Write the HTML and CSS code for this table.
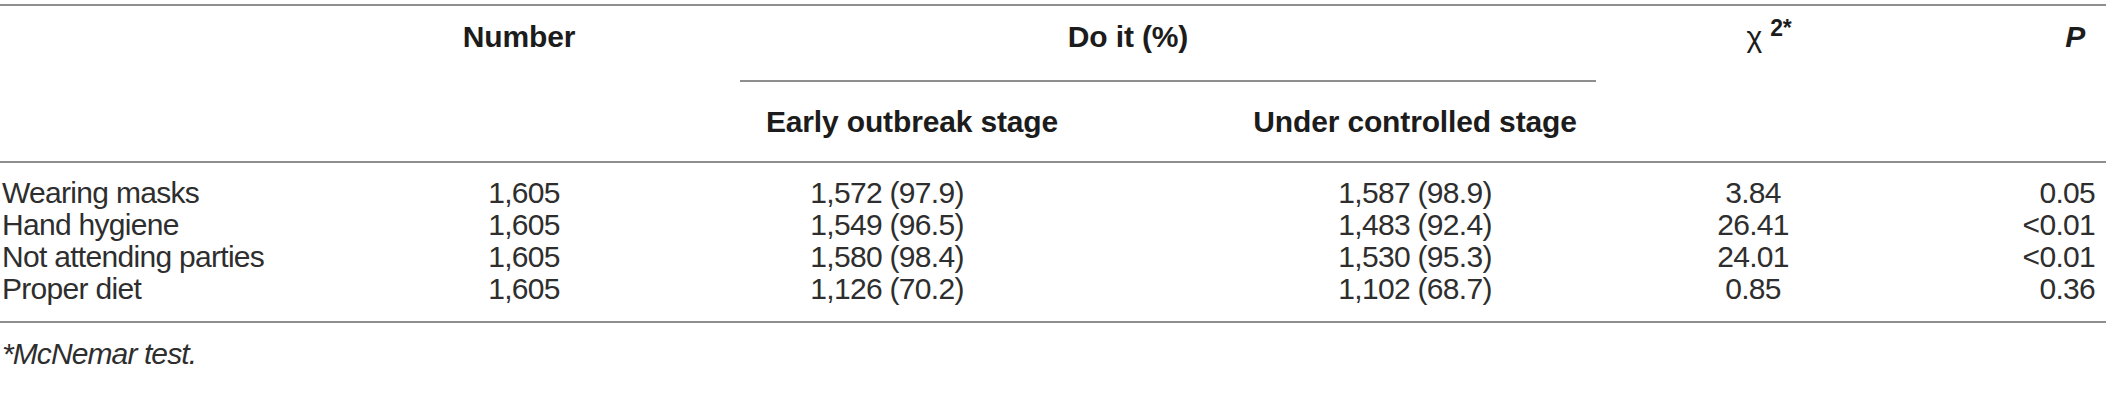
FILE: index.html
```html
<!DOCTYPE html>
<html>
<head>
<meta charset="utf-8">
<link rel="stylesheet" href="styles.css">
</head>
<body>
<div class="wrap">
<table class="data">
  <colgroup>
    <col class="c-label">
    <col class="c-num">
    <col class="c-early">
    <col class="c-under">
    <col class="c-chi">
    <col class="c-p">
  </colgroup>
  <thead>
    <tr class="h1">
      <th class="lab"></th>
      <th class="ctr num">Number</th>
      <th class="ctr span" colspan="2"><div class="doit">Do it (%)</div></th>
      <th class="ctr chihead"><span class="chi">χ</span> <sup class="sup">2*</sup></th>
      <th class="rt phead"><i>P</i></th>
    </tr>
    <tr class="h2">
      <th></th>
      <th></th>
      <th class="ctr earlyhead">Early outbreak stage</th>
      <th class="ctr">Under controlled stage</th>
      <th></th>
      <th></th>
    </tr>
  </thead>
  <tbody>
    <tr>
      <td class="lab">Wearing masks</td>
      <td class="ctr num">1,605</td>
      <td class="ctr early">1,572 (97.9)</td>
      <td class="ctr">1,587 (98.9)</td>
      <td class="ctr">3.84</td>
      <td class="rt">0.05</td>
    </tr>
    <tr>
      <td class="lab">Hand hygiene</td>
      <td class="ctr num">1,605</td>
      <td class="ctr early">1,549 (96.5)</td>
      <td class="ctr">1,483 (92.4)</td>
      <td class="ctr">26.41</td>
      <td class="rt">&lt;0.01</td>
    </tr>
    <tr>
      <td class="lab">Not attending parties</td>
      <td class="ctr num">1,605</td>
      <td class="ctr early">1,580 (98.4)</td>
      <td class="ctr">1,530 (95.3)</td>
      <td class="ctr">24.01</td>
      <td class="rt">&lt;0.01</td>
    </tr>
    <tr>
      <td class="lab">Proper diet</td>
      <td class="ctr num">1,605</td>
      <td class="ctr early">1,126 (70.2)</td>
      <td class="ctr">1,102 (68.7)</td>
      <td class="ctr">0.85</td>
      <td class="rt">0.36</td>
    </tr>
  </tbody>
</table>
<p class="foot">*McNemar test.</p>
</div>
</body>
</html>
```
FILE: styles.css
```css
html, body {
  margin: 0;
  padding: 0;
  background: #ffffff;
}
body {
  font-family: "Liberation Sans", Arial, sans-serif;
  font-size: 30px;
  line-height: 32px;
  letter-spacing: -0.7px;
  color: #2e2e2e;
}
.wrap {
  width: 2106px;
  padding-top: 4px;
}
.data {
  width: 2106px;
  border-collapse: collapse;
  table-layout: fixed;
  border-top: 2px solid #8f8f8f;
  border-bottom: 2px solid #8f8f8f;
}
.c-label { width: 420px; }
.c-num { width: 198px; }
.c-early { width: 574px; }
.c-under { width: 446px; }
.c-chi { width: 230px; }
.c-p { width: 238px; }

th, td {
  padding: 0;
  vertical-align: top;
}
th {
  font-weight: bold;
  letter-spacing: -0.15px;
  color: #1c1c1c;
}
.ctr { text-align: center; }
.rt { text-align: right; padding-right: 11px; }
.lab { text-align: left; padding-left: 2px; }
td.num { padding-left: 10px; }
td.early { padding-right: 36px; }
.earlyhead { padding-left: 14px; }
.chihead { padding-left: 32px; }
th.phead { padding-right: 21px; }

.h1 th { padding-top: 15px; }
.doit {
  margin: 0 42px 0 122px;
  padding-bottom: 27px;
  border-bottom: 2px solid #8f8f8f;
  text-indent: -80px;
}
.h2 th {
  padding-top: 24px;
  padding-bottom: 23px;
  border-bottom: 2px solid #8f8f8f;
}
.chi {
  font-weight: normal;
}
.sup {
  font-size: 23px;
  line-height: 0;
  vertical-align: 11px;
}
tbody tr:first-child td { padding-top: 14px; }
tbody tr:last-child td { padding-bottom: 16px; }
.foot {
  margin: 15px 0 0 2px;
  font-style: italic;
  letter-spacing: -0.9px;
}
```
